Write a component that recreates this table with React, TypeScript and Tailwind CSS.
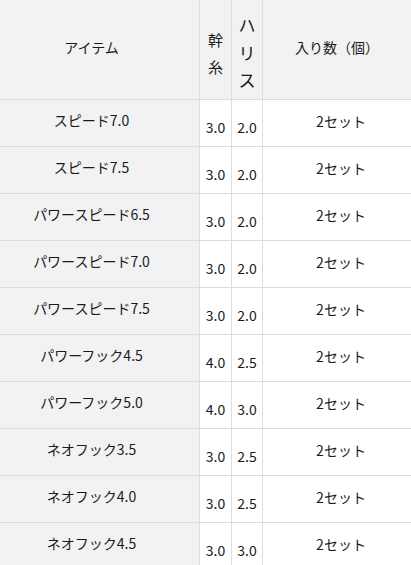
const rows = [
  { name: "スピード7.0", main: "3.0", harris: "2.0" },
  { name: "スピード7.5", main: "3.0", harris: "2.0" },
  { name: "パワースピード6.5", main: "3.0", harris: "2.0" },
  { name: "パワースピード7.0", main: "3.0", harris: "2.0" },
  { name: "パワースピード7.5", main: "3.0", harris: "2.0" },
  { name: "パワーフック4.5", main: "4.0", harris: "2.5" },
  { name: "パワーフック5.0", main: "4.0", harris: "3.0" },
  { name: "ネオフック3.5", main: "3.0", harris: "2.5" },
  { name: "ネオフック4.0", main: "3.0", harris: "2.5" },
  { name: "ネオフック4.5", main: "3.0", harris: "3.0" },
];

const App = () => {
  return (
    <div
      className="w-[411px] h-[565px] overflow-hidden bg-white text-[14px] text-[#1a1a1a]"
      style={{ fontFamily: '"Noto Sans CJK JP", "Noto Sans", sans-serif' }}
    >
      <div className="w-[419px]">
        {/* Header */}
        <div className="flex h-[100px] border-b border-[#ddd] bg-[#f2f2f2]">
          <div className="w-[200px] shrink-0 border-r border-[#ddd] flex items-center justify-center pr-4 pb-[6px] leading-5">
            アイテム
          </div>
          <div className="w-[32px] shrink-0 border-r border-[#ddd] flex justify-center pt-[26px]">
            <span className="w-[1em] text-[15px] leading-[27px] break-all">幹糸</span>
          </div>
          <div className="w-[31px] shrink-0 border-r border-[#ddd] flex justify-center pt-[11px]">
            <span className="w-[1em] text-[17px] leading-[27.5px] break-all">ハリス</span>
          </div>
          <div className="w-[156px] shrink-0 flex items-center justify-center pr-2 pb-[6px] leading-5">
            入り数（個）
          </div>
        </div>

        {/* Rows */}
        {rows.map((row) => (
          <div key={row.name} className="flex h-[47px] border-b border-[#ddd]">
            <div className="w-[200px] shrink-0 border-r border-[#ddd] bg-[#f2f2f2] flex items-center justify-center pr-4 pb-[6px] leading-5">
              {row.name}
            </div>
            <div className="w-[32px] shrink-0 border-r border-[#ddd] text-center pt-[17px] leading-5">
              {row.main}
            </div>
            <div className="w-[31px] shrink-0 border-r border-[#ddd] text-center pt-[17px] leading-5">
              {row.harris}
            </div>
            <div className="w-[156px] shrink-0 flex items-center justify-center pb-[5px] leading-5">
              2セット
            </div>
          </div>
        ))}
      </div>
    </div>
  );
};

export default App;
